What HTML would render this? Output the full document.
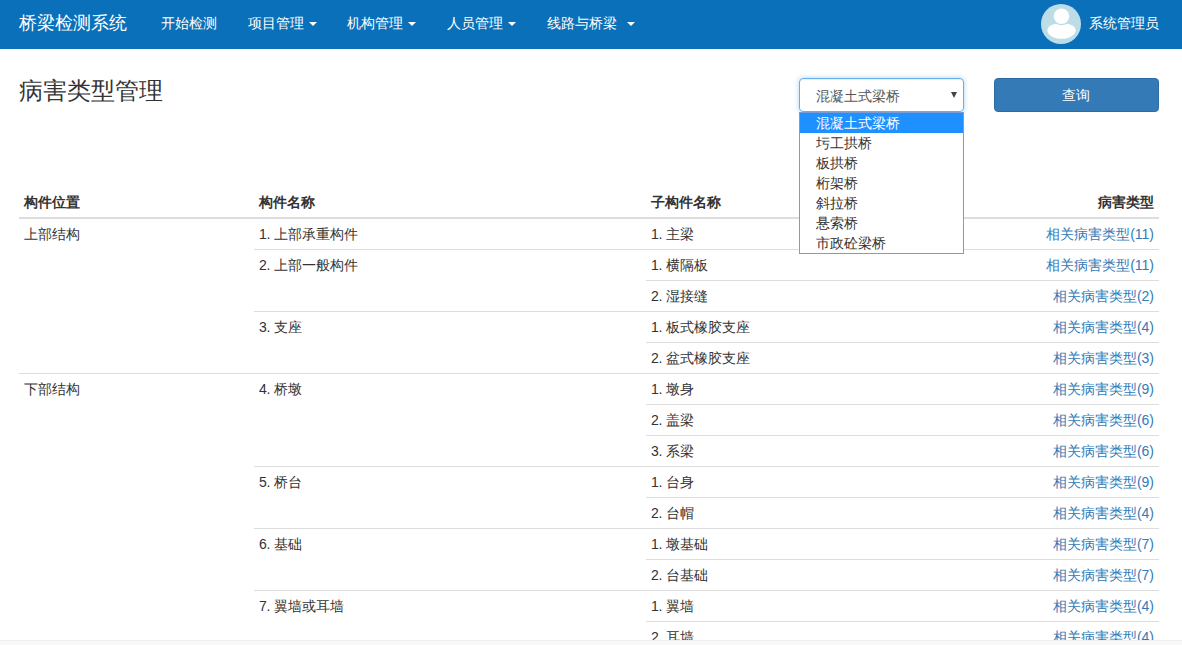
<!DOCTYPE html>
<html><head><meta charset="utf-8">
<style>
*{box-sizing:border-box}
html,body{margin:0;padding:0;width:1182px;height:645px;overflow:hidden;background:#fff}
body{font-family:"Liberation Sans",sans-serif;font-size:14px;color:#333;position:relative}
.nav{position:absolute;left:0;top:0;width:1182px;height:49px;background:#0970b9}
.nav div{position:absolute;color:#fff;white-space:nowrap;line-height:20px}
.brand{left:19px;top:13px;font-size:18px}
.ni{top:13px;font-size:14px}
.caret{display:inline-block;width:0;height:0;border-top:4px solid #fff;border-left:4px solid transparent;border-right:4px solid transparent;vertical-align:middle;position:absolute;top:9px}
.avatar{left:1041px;top:4px;width:40px;height:40px;border-radius:50%;background:#bcdde7;overflow:hidden}
h1{position:absolute;margin:0;left:19px;top:77px;font-size:24px;font-weight:normal;line-height:28px;color:#333}
.select{position:absolute;left:799px;top:78px;width:165px;height:34px;border:1px solid #66afe9;border-radius:4px;box-shadow:inset 0 1px 1px rgba(0,0,0,.075),0 0 5px rgba(102,175,233,.55)}
.select span{position:absolute;left:16px;top:7px;line-height:20px;color:#555}
.select i{position:absolute;left:151px;top:13px;width:0;height:0;border-top:6px solid #444;border-left:3px solid transparent;border-right:3px solid transparent}
.dd{position:absolute;z-index:10;left:799px;top:112px;width:165px;height:142px;border:1px solid #7a9cd3;background:#fff}
.opt{height:20px;line-height:20px;padding-left:16px;color:#333}
.opt.sel{background:#1e90ff;color:#fff}
.btn{position:absolute;left:994px;top:78px;width:165px;height:34px;background:#337ab7;border:1px solid #2e6da4;border-radius:4px;color:#fff;text-align:center;line-height:32px;padding-right:2px}
.th{position:absolute;top:192px;font-weight:bold;line-height:20px}
.hl{position:absolute;height:1px;background:#ddd}
.td{position:absolute;line-height:20px;padding-top:5px;white-space:nowrap}
.lk{color:#337ab7}
.n{letter-spacing:-0.3px}
.footer{position:absolute;left:0;top:640px;width:1182px;height:5px;background:#f8f8f8;border-top:1px solid #efefef}
</style></head><body>
<div class="nav">
  <div class="brand">桥梁检测系统</div>
  <div class="ni" style="left:161px">开始检测</div>
  <div class="ni" style="left:248px">项目管理<span class="caret" style="left:61px"></span></div>
  <div class="ni" style="left:347px">机构管理<span class="caret" style="left:61px"></span></div>
  <div class="ni" style="left:447px">人员管理<span class="caret" style="left:61px"></span></div>
  <div class="ni" style="left:547px">线路与桥梁<span class="caret" style="left:80px"></span></div>
  <div class="avatar"><svg width="40" height="40" viewBox="0 0 40 40"><path d="M6.3 26.5 C7 21 13 19.6 20.5 19.6 C28 19.6 34 21 34.7 26.5 C34 31.5 28 34.8 20.5 34.8 C13 34.8 7 31.5 6.3 26.5 Z" fill="#fff"/><circle cx="20.5" cy="12.3" r="8.4" fill="#fff" stroke="#bcdde7" stroke-width="1.2"/></svg></div>
  <div class="ni" style="left:1089px">系统管理员</div>
</div>
<h1>病害类型管理</h1>
<div class="select"><span>混凝土式梁桥</span><i></i></div>
<div class="btn">查询</div>
<div class="dd"><div class="opt sel">混凝土式梁桥</div><div class="opt">圬工拱桥</div><div class="opt">板拱桥</div><div class="opt">桁架桥</div><div class="opt">斜拉桥</div><div class="opt">悬索桥</div><div class="opt">市政砼梁桥</div></div>
<div class="th" style="left:24px">构件位置</div>
<div class="th" style="left:259px">构件名称</div>
<div class="th" style="left:651px">子构件名称</div>
<div class="th" style="right:28px">病害类型</div>
<div class="hl" style="top:217px;left:19px;width:1140px;height:2px"></div>
<div class="hl" style="top:249px;left:254px;width:905px"></div>
<div class="hl" style="top:280px;left:646px;width:513px"></div>
<div class="hl" style="top:311px;left:254px;width:905px"></div>
<div class="hl" style="top:342px;left:646px;width:513px"></div>
<div class="hl" style="top:373px;left:19px;width:1140px"></div>
<div class="hl" style="top:404px;left:646px;width:513px"></div>
<div class="hl" style="top:435px;left:646px;width:513px"></div>
<div class="hl" style="top:466px;left:254px;width:905px"></div>
<div class="hl" style="top:497px;left:646px;width:513px"></div>
<div class="hl" style="top:528px;left:254px;width:905px"></div>
<div class="hl" style="top:559px;left:646px;width:513px"></div>
<div class="hl" style="top:590px;left:254px;width:905px"></div>
<div class="hl" style="top:621px;left:646px;width:513px"></div>
<div class="td" style="top:219px;left:24px">上部结构</div>
<div class="td" style="top:219px;left:259px"><span class="n">1. </span>上部承重构件</div>
<div class="td" style="top:219px;left:651px"><span class="n">1. </span>主梁</div>
<div class="td lk" style="top:219px;right:28px">相关病害类型(11)</div>
<div class="td" style="top:250px;left:259px"><span class="n">2. </span>上部一般构件</div>
<div class="td" style="top:250px;left:651px"><span class="n">1. </span>横隔板</div>
<div class="td lk" style="top:250px;right:28px">相关病害类型(11)</div>
<div class="td" style="top:281px;left:651px"><span class="n">2. </span>湿接缝</div>
<div class="td lk" style="top:281px;right:28px">相关病害类型(2)</div>
<div class="td" style="top:312px;left:259px"><span class="n">3. </span>支座</div>
<div class="td" style="top:312px;left:651px"><span class="n">1. </span>板式橡胶支座</div>
<div class="td lk" style="top:312px;right:28px">相关病害类型(4)</div>
<div class="td" style="top:343px;left:651px"><span class="n">2. </span>盆式橡胶支座</div>
<div class="td lk" style="top:343px;right:28px">相关病害类型(3)</div>
<div class="td" style="top:374px;left:24px">下部结构</div>
<div class="td" style="top:374px;left:259px"><span class="n">4. </span>桥墩</div>
<div class="td" style="top:374px;left:651px"><span class="n">1. </span>墩身</div>
<div class="td lk" style="top:374px;right:28px">相关病害类型(9)</div>
<div class="td" style="top:405px;left:651px"><span class="n">2. </span>盖梁</div>
<div class="td lk" style="top:405px;right:28px">相关病害类型(6)</div>
<div class="td" style="top:436px;left:651px"><span class="n">3. </span>系梁</div>
<div class="td lk" style="top:436px;right:28px">相关病害类型(6)</div>
<div class="td" style="top:467px;left:259px"><span class="n">5. </span>桥台</div>
<div class="td" style="top:467px;left:651px"><span class="n">1. </span>台身</div>
<div class="td lk" style="top:467px;right:28px">相关病害类型(9)</div>
<div class="td" style="top:498px;left:651px"><span class="n">2. </span>台帽</div>
<div class="td lk" style="top:498px;right:28px">相关病害类型(4)</div>
<div class="td" style="top:529px;left:259px"><span class="n">6. </span>基础</div>
<div class="td" style="top:529px;left:651px"><span class="n">1. </span>墩基础</div>
<div class="td lk" style="top:529px;right:28px">相关病害类型(7)</div>
<div class="td" style="top:560px;left:651px"><span class="n">2. </span>台基础</div>
<div class="td lk" style="top:560px;right:28px">相关病害类型(7)</div>
<div class="td" style="top:591px;left:259px"><span class="n">7. </span>翼墙或耳墙</div>
<div class="td" style="top:591px;left:651px"><span class="n">1. </span>翼墙</div>
<div class="td lk" style="top:591px;right:28px">相关病害类型(4)</div>
<div class="td" style="top:622px;left:651px"><span class="n">2. </span>耳墙</div>
<div class="td lk" style="top:622px;right:28px">相关病害类型(4)</div>
<div class="footer"></div>
</body></html>
